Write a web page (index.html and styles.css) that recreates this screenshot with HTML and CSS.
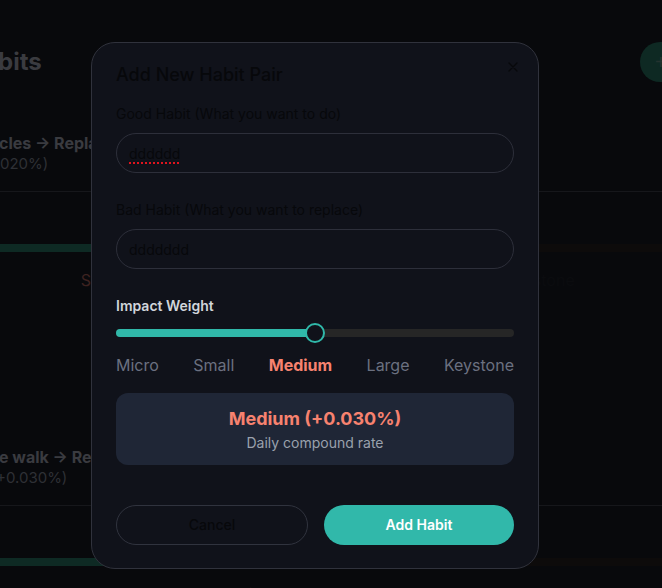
FILE: index.html
```html
<!DOCTYPE html>
<html lang="en">
<head>
<meta charset="utf-8">
<title>Add New Habit Pair</title>
<link rel="stylesheet" href="styles.css">
</head>
<body>
  <div class="page">
    <header class="page-head">
      <h1 class="page-title">bits</h1>
      <button class="fab" aria-label="Add">+</button>
    </header>

    <section class="card">
      <div class="card-name">cles → Replace doomscrolling</div>
      <div class="card-sub"><span class="cut">.020%)</span></div>
      <div class="card-rule"></div>
      <div class="bar"><div class="bar-fill"></div></div>
      <div class="ticks-bg">
        <span>Micro</span><span class="on">Small</span><span>Medium</span><span>Large</span><span>Keystone</span>
      </div>
    </section>

    <section class="card">
      <div class="card-name">e walk → Replace sitting</div>
      <div class="card-sub"><span class="cut">+0.030%)</span></div>
      <div class="card-rule"></div>
      <div class="bar"><div class="bar-fill"></div></div>
      <div class="ticks-bg">
        <span>Micro</span><span>Small</span><span class="on">Medium</span><span>Large</span><span>Keystone</span>
      </div>
    </section>
  </div>

  <div class="modal" role="dialog" aria-label="Add New Habit Pair">
    <h2 class="modal-title">Add New Habit Pair</h2>
    <button class="close" aria-label="Close">
      <svg width="10" height="10" viewBox="0 0 10 10"><path d="M1 1L9 9M9 1L1 9" stroke="currentColor" stroke-width="1.3" stroke-linecap="round"/></svg>
    </button>

    <div class="field">
      <label class="label">Good Habit (What you want to do)</label>
      <div class="input"><span class="misspelled">dddddd</span></div>
    </div>

    <div class="field">
      <label class="label">Bad Habit (What you want to replace)</label>
      <div class="input">ddddddd</div>
    </div>

    <div class="label strong">Impact Weight</div>
    <div class="slider">
      <div class="track"><div class="fill"></div></div>
      <div class="thumb"></div>
    </div>
    <div class="ticks">
      <span>Micro</span><span>Small</span><span class="active">Medium</span><span>Large</span><span>Keystone</span>
    </div>

    <div class="result">
      <div class="result-main">Medium (+0.030%)</div>
      <div class="result-sub">Daily compound rate</div>
    </div>

    <div class="actions">
      <button class="btn btn-cancel">Cancel</button>
      <button class="btn btn-primary">Add Habit</button>
    </div>
  </div>
</body>
</html>
```

FILE: styles.css
```css
* { box-sizing: border-box; }

html, body {
  margin: 0;
  padding: 0;
  width: 662px;
  height: 588px;
  overflow: hidden;
  background: #08090c;
  font-family: Inter, "Noto Sans", sans-serif;
}

/* ---------- dimmed background page ---------- */
.page {
  width: 662px;
  height: 588px;
  overflow: hidden;
}

.page-head {
  display: flex;
  justify-content: space-between;
  align-items: center;
  height: 40px;
  margin-top: 42px;
  margin-right: -18px;
}

.page-title {
  margin: 0 0 0 -2px;
  font-size: 24px;
  line-height: 40px;
  font-weight: 700;
  color: #3a3b40;
}

.fab {
  width: 40px;
  height: 40px;
  border-radius: 50%;
  border: none;
  background: #0e2923;
  color: #24332f;
  font-size: 20px;
  text-align: left;
  padding: 0 0 0 15px;
}

.card {
  height: 314px;
  padding-top: 50px;
}

.card-name {
  font-size: 16px;
  line-height: 22px;
  font-weight: 700;
  color: #3a3b40;
  margin-left: -1px;
  white-space: nowrap;
}

.card-sub {
  font-size: 15px;
  line-height: 20px;
  color: #2e3035;
}

.cut { margin-left: -4px; }

.card-rule {
  margin-top: 17px;
  border-bottom: 1px solid #16171b;
}

.bar {
  margin-top: 52px;
  height: 8px;
  background: #0d0b0b;
}

.bar-fill {
  width: 45%;
  height: 100%;
  background: #0e2a24;
}

.ticks-bg {
  display: flex;
  gap: 93px;
  margin-top: 16px;
  margin-left: -55px;
  font-size: 16px;
  line-height: 24px;
  color: #0b0c0f;
  white-space: nowrap;
}

.ticks-bg .on { color: #3d2220; }

/* ---------- modal ---------- */
.modal {
  position: absolute;
  left: 91px;
  top: 42px;
  width: 448px;
  padding: 24px 24px 23px;
  background: #10121a;
  border: 1px solid #30323c;
  border-radius: 24px;
}

.modal-title {
  margin: 0 0 21px;
  font-size: 18px;
  line-height: 16px;
  font-weight: 500;
  color: #07080b;
}

.close {
  position: absolute;
  top: 19px;
  right: 20px;
  width: 10px;
  height: 10px;
  padding: 0;
  border: none;
  background: none;
  color: #07080b;
  display: flex;
}

.field { margin-bottom: 27px; }

.label {
  display: block;
  margin-bottom: 9px;
  font-size: 14px;
  line-height: 20px;
  font-weight: 400;
  color: #07080b;
}

.label.strong {
  margin-bottom: 0;
  font-weight: 600;
  color: #d1d5db;
}

.input {
  height: 40px;
  border: 1px solid #2d2f3a;
  border-radius: 999px;
  padding: 0 12px;
  display: flex;
  align-items: center;
  font-size: 14px;
  color: #07080b;
}

.misspelled {
  text-decoration: underline dotted #e0141e;
  text-decoration-thickness: 2px;
  text-underline-offset: 4px;
}

.slider {
  position: relative;
  height: 20px;
  margin-top: 7px;
  display: flex;
  align-items: center;
}

.track {
  width: 100%;
  height: 8px;
  border-radius: 4px;
  background: #262626;
  overflow: hidden;
}

.fill {
  width: 50%;
  height: 100%;
  background: #30b8a9;
}

.thumb {
  position: absolute;
  left: calc(50% - 10px);
  top: 0;
  width: 20px;
  height: 20px;
  border-radius: 50%;
  border: 2px solid #30b8a9;
  background: #10121a;
}

.ticks {
  display: flex;
  justify-content: space-between;
  margin-top: 10px;
  font-size: 16px;
  line-height: 24px;
  color: #6b7080;
}

.ticks .active {
  font-weight: 700;
  color: #f7826f;
}

.result {
  margin-top: 16px;
  padding: 12px;
  border-radius: 12px;
  background: #1f2636;
  text-align: center;
}

.result-main {
  font-size: 18px;
  line-height: 28px;
  font-weight: 700;
  color: #f7826f;
}

.result-sub {
  font-size: 14px;
  line-height: 20px;
  color: #9aa1ad;
}

.actions {
  display: flex;
  gap: 16px;
  margin-top: 40px;
}

.btn {
  flex: 1;
  height: 40px;
  border-radius: 999px;
  font-family: inherit;
  font-size: 14px;
  line-height: 20px;
}

.btn-cancel {
  background: transparent;
  border: 1px solid #30333e;
  color: #07080b;
  font-weight: 500;
}

.btn-primary {
  background: #31b8aa;
  border: none;
  color: #ffffff;
  font-weight: 600;
}
```
